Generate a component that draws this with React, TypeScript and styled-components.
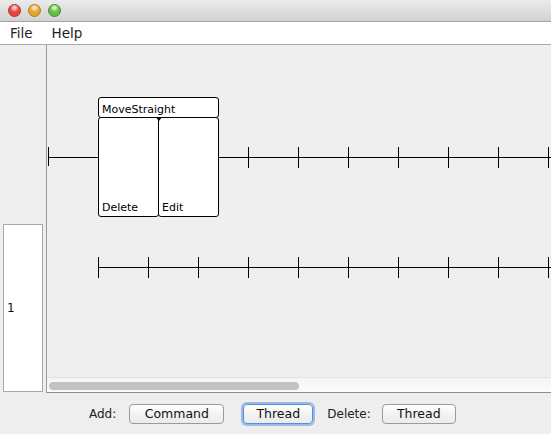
import React from "react";
import styled, { createGlobalStyle } from "styled-components";

const GlobalStyle = createGlobalStyle`
  html, body {
    margin: 0;
    padding: 0;
    overflow: hidden;
    background: #ececec;
  }
`;

const Window = styled.div`
  width: 551px;
  height: 434px;
  display: flex;
  flex-direction: column;
  background: #eeeeee;
  font-family: "DejaVu Sans", "Liberation Sans", sans-serif;
  color: #1e1e1e;
  overflow: hidden;
`;

const TitleBar = styled.div`
  height: 21px;
  flex-shrink: 0;
  display: flex;
  align-items: center;
  gap: 7px;
  padding-left: 8px;
  background: linear-gradient(#ebebeb, #d2d2d2);
  border-bottom: 1px solid #a3a3a3;
  border-radius: 4px 4px 0 0;
`;

const Light = styled.div<{ color: string; rim: string }>`
  width: 13px;
  height: 13px;
  box-sizing: border-box;
  border-radius: 50%;
  border: 1px solid ${({ rim }) => rim};
  background: radial-gradient(
      circle at 50% 25%,
      rgba(255, 255, 255, 0.9) 0,
      rgba(255, 255, 255, 0) 45%
    ),
    ${({ color }) => color};
`;

const MenuBar = styled.div`
  height: 22px;
  flex-shrink: 0;
  display: flex;
  align-items: center;
  background: #ffffff;
  border-bottom: 1px solid #a9a9a9;
  font-size: 13.5px;
`;

const MenuItem = styled.span`
  padding: 0 10px 0 10px;
  margin-right: 9px;
  &:last-child {
    padding-left: 0;
  }
`;

const Body = styled.div`
  height: 348px;
  display: flex;
  flex-shrink: 0;
`;

const Sidebar = styled.div`
  width: 46px;
  flex-shrink: 0;
  display: flex;
  flex-direction: column;
  justify-content: flex-end;
  padding: 0 0 1px 3px;
  box-sizing: border-box;
`;

const ThreadBox = styled.div`
  width: 40px;
  height: 168px;
  box-sizing: border-box;
  background: #ffffff;
  border: 1px solid #a8a8a8;
  display: flex;
  align-items: center;
  padding-left: 3px;
  font-size: 12px;
  color: #111;
`;

const CanvasPanel = styled.div`
  flex: 1;
  display: flex;
  flex-direction: column;
  border-left: 1px solid #9c9c9c;
  border-bottom: 1px solid #8e8e8e;
  background: #efefef;
  overflow: hidden;
`;

const Canvas = styled.div`
  flex: 1;
  position: relative;
  overflow: hidden;
`;

const Timeline = styled.svg`
  position: absolute;
  left: 0;
  top: 0;
`;

const CommandTitle = styled.div`
  position: absolute;
  left: 51px;
  top: 52px;
  width: 121px;
  height: 21px;
  box-sizing: border-box;
  background: #ffffff;
  border: 1px solid #000;
  border-radius: 3px;
  font-size: 11px;
  padding: 5px 0 0 3px;
  line-height: 13px;
  color: #000;
`;

const CommandPart = styled.div<{ left: number; width: number }>`
  position: absolute;
  left: ${({ left }) => left}px;
  top: 72px;
  width: ${({ width }) => width}px;
  height: 100px;
  box-sizing: border-box;
  background: #ffffff;
  border: 1px solid #000;
  border-radius: 3px;
  display: flex;
  align-items: flex-end;
  padding: 0 0 2px 3px;
  font-size: 11px;
  line-height: 13px;
  color: #000;
`;

const Arrow = styled.div`
  position: absolute;
  left: 109px;
  top: 72px;
  width: 0;
  height: 0;
  border-left: 3px solid transparent;
  border-right: 3px solid transparent;
  border-top: 4px solid #000;
`;

const ScrollTrack = styled.div`
  height: 15px;
  flex-shrink: 0;
  box-sizing: border-box;
  border-top: 1px solid #e2e2e2;
  background: linear-gradient(#f4f4f4, #fbfbfb);
  padding: 4px 0 0 2px;
`;

const ScrollThumb = styled.div`
  width: 250px;
  height: 8px;
  border-radius: 4px;
  background: #c2c2c2;
`;

const ButtonBar = styled.div`
  flex: 1;
  display: flex;
  align-items: center;
  padding-left: 89px;
  font-size: 12px;
`;

const Label = styled.span<{ gap: number }>`
  margin-right: ${({ gap }) => gap}px;
  color: #222;
`;

const Button = styled.button<{ width: number; focused?: boolean; gap: number }>`
  width: ${({ width }) => width}px;
  height: 20px;
  flex-shrink: 0;
  margin-right: ${({ gap }) => gap}px;
  padding: 0;
  font-family: inherit;
  font-size: 12.5px;
  color: #111;
  border-radius: 4px;
  border: 1px solid ${({ focused }) => (focused ? "#5b8fd0" : "#9b9b9b")};
  background: linear-gradient(#ffffff, #f0f0f0 60%, #ececec);
  box-shadow: ${({ focused }) =>
    focused ? "0 0 0 2px rgba(120, 170, 230, 0.75)" : "none"};
`;

const ticks = (start: number, end: number) => {
  const xs: number[] = [];
  for (let x = start; x <= end; x += 50) xs.push(x);
  return xs;
};

export default function App(): React.JSX.Element {
  return (
    <Window>
      <GlobalStyle />
      <TitleBar>
        <Light color="#e5453f" rim="#b3312b" />
        <Light color="#e2a52a" rim="#b07d1b" />
        <Light color="#62c041" rim="#3f8d2a" />
      </TitleBar>
      <MenuBar>
        <MenuItem>File</MenuItem>
        <MenuItem>Help</MenuItem>
      </MenuBar>
      <Body>
        <Sidebar>
          <ThreadBox>1</ThreadBox>
        </Sidebar>
        <CanvasPanel>
          <Canvas>
            <Timeline width={504} height={332}>
              <g stroke="#000" strokeWidth={1} shapeRendering="crispEdges">
                <line x1={1} y1={112.5} x2={51} y2={112.5} />
                <line x1={172} y1={112.5} x2={504} y2={112.5} />
                <line x1={1.5} y1={102} x2={1.5} y2={121} />
                {ticks(201, 501).map((x) => (
                  <line key={`a${x}`} x1={x + 0.5} y1={102} x2={x + 0.5} y2={123} />
                ))}
                <line x1={51} y1={222.5} x2={504} y2={222.5} />
                {ticks(51, 501).map((x) => (
                  <line key={`b${x}`} x1={x + 0.5} y1={212} x2={x + 0.5} y2={233} />
                ))}
              </g>
            </Timeline>
            <CommandTitle>MoveStraight</CommandTitle>
            <CommandPart left={51} width={61}>
              Delete
            </CommandPart>
            <CommandPart left={111} width={61}>
              Edit
            </CommandPart>
            <Arrow />
          </Canvas>
          <ScrollTrack>
            <ScrollThumb />
          </ScrollTrack>
        </CanvasPanel>
      </Body>
      <ButtonBar>
        <Label gap={13}>Add:</Label>
        <Button width={95} gap={19}>
          Command
        </Button>
        <Button width={70} gap={14} focused>
          Thread
        </Button>
        <Label gap={11}>Delete:</Label>
        <Button width={74} gap={0}>
          Thread
        </Button>
      </ButtonBar>
    </Window>
  );
}
